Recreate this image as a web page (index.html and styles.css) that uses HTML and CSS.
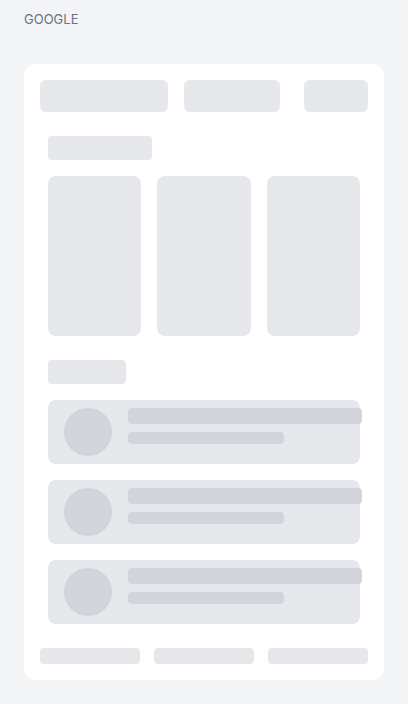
FILE: index.html
```html
<!DOCTYPE html>
<html>
<head>
<meta charset="utf-8">
<link rel="stylesheet" href="styles.css">
</head>
<body>
<div class="page">
  <div class="brand">GOOGLE</div>
  <div class="card">
    <div class="top-row">
      <div class="sk top-a"></div>
      <div class="sk top-b"></div>
      <div class="sk top-c"></div>
    </div>
    <div class="section">
      <div class="sk label label-wide"></div>
      <div class="columns">
        <div class="sk col"></div>
        <div class="sk col"></div>
        <div class="sk col"></div>
      </div>
    </div>
    <div class="section">
      <div class="sk label label-narrow"></div>
      <div class="list">
        <div class="item">
          <div class="avatar"></div>
          <div class="lines">
            <div class="line line-1"></div>
            <div class="line line-2"></div>
          </div>
        </div>
        <div class="item">
          <div class="avatar"></div>
          <div class="lines">
            <div class="line line-1"></div>
            <div class="line line-2"></div>
          </div>
        </div>
        <div class="item">
          <div class="avatar"></div>
          <div class="lines">
            <div class="line line-1"></div>
            <div class="line line-2"></div>
          </div>
        </div>
      </div>
    </div>
    <div class="footer-row">
      <div class="sk foot"></div>
      <div class="sk foot"></div>
      <div class="sk foot"></div>
    </div>
  </div>
</div>
</body>
</html>
```

FILE: styles.css
```css
* { box-sizing: border-box; }
html, body {
  margin: 0;
  padding: 0;
  background: #f3f4f6;
}
.page {
  width: 408px;
  height: 704px;
  padding: 0 24px;
}
.brand {
  font-family: Inter, "Liberation Sans", sans-serif;
  font-size: 13px;
  line-height: 16px;
  color: #6b7280;
  padding-top: 11px;
  height: 64px;
}
.card {
  width: 360px;
  height: 616px;
  background: #ffffff;
  border-radius: 12px;
  padding: 16px;
  display: flex;
  flex-direction: column;
  gap: 24px;
}
.sk {
  background: #e5e7eb;
}
.top-row {
  display: flex;
  height: 32px;
}
.top-a { width: 128px; height: 32px; border-radius: 6px; }
.top-b { width: 96px; height: 32px; border-radius: 6px; margin-left: 16px; }
.top-c { width: 64px; height: 32px; border-radius: 6px; margin-left: 24px; }
.section {
  padding: 0 8px;
  display: flex;
  flex-direction: column;
  gap: 16px;
}
.label { height: 24px; border-radius: 4px; }
.label-wide { width: 104px; }
.label-narrow { width: 78px; }
.columns {
  display: grid;
  grid-template-columns: repeat(3, 1fr);
  gap: 16px;
}
.col { height: 160px; border-radius: 8px; }
.list {
  display: flex;
  flex-direction: column;
  gap: 16px;
}
.item {
  height: 64px;
  background: #e5e7eb;
  border-radius: 8px;
  padding: 8px 16px;
  display: flex;
  gap: 16px;
}
.avatar {
  width: 48px;
  height: 48px;
  flex: none;
  border-radius: 50%;
  background: #d1d5db;
}
.lines {
  display: flex;
  flex-direction: column;
  gap: 8px;
}
.line {
  background: #d1d5db;
  border-radius: 4px;
}
.line-1 { width: 234px; height: 16px; }
.line-2 { width: 156px; height: 12px; }
.footer-row {
  display: flex;
  gap: 14px;
}
.foot { width: 100px; height: 16px; border-radius: 4px; }
```
